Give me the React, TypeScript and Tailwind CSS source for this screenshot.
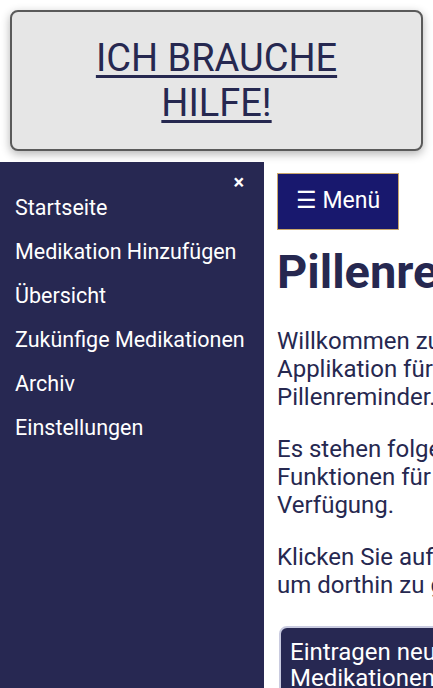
import React from "react";

const navItems = [
  "Startseite",
  "Medikation Hinzufügen",
  "Übersicht",
  "Zukünfige Medikationen",
  "Archiv",
  "Einstellungen",
];

export default function App() {
  return (
    <div
      className="w-[433px] h-[688px] overflow-hidden bg-white flex flex-col"
      style={{ fontFamily: "Roboto, 'Noto Sans', sans-serif" }}
    >
      <div className="m-[10px] mb-[11px] h-[141px] shrink-0 rounded-[8px] border-2 border-[#5a5a5a] bg-[#e6e6e6] shadow-[0_3px_10px_rgba(0,0,0,0.3)] flex items-center justify-center">
        <a
          href="#"
          className="text-center text-[38px] leading-[45px] text-[#262850] underline decoration-[3px] underline-offset-[4px]"
        >
          ICH BRAUCHE
          <br />
          HILFE!
        </a>
      </div>

      <div className="flex flex-1 min-h-0">
        <aside className="relative w-[264px] shrink-0 bg-[#272852] pt-[33px]">
          <button className="absolute right-[20px] top-[10px] text-[20px] font-bold text-white leading-none">
            ×
          </button>
          <nav className="flex flex-col">
            {navItems.map((item) => (
              <a
                key={item}
                href="#"
                className="block h-[44px] pl-[15px] text-[21.5px] leading-[26px] text-white"
              >
                {item}
              </a>
            ))}
          </nav>
        </aside>

        <main className="w-[340px] shrink-0 pl-[13px] pt-[11px] text-[#262850]">
          <button className="h-[57px] w-[122px] border border-[#c9a66b] bg-[#18186e] text-[23px] text-white">
            ☰ Menü
          </button>
          <h1 className="mt-[15px] text-[47px] font-bold leading-[54px] whitespace-nowrap">
            Pillenreminder
          </h1>
          <div className="mt-[28px] w-[320px] text-[24px] leading-[28px]">
            <p>Willkommen zur offiziellen Applikation für den Pillenreminder.</p>
            <p className="mt-[24px]">
              Es stehen folgende nützliche Funktionen für Sie zur Verfügung.
            </p>
            <p className="mt-[24px]">
              Klicken Sie auf eine Funktion, um dorthin zu gelangen.
            </p>
          </div>
          <div className="mt-[27px] ml-[2px] w-[300px] rounded-[8px] border-2 border-[#c9cbe0] bg-[#272852] px-[9px] pt-[11px] pb-[10px] text-[24px] leading-[26px] text-white">
            Eintragen neuer
            <br />
            Medikationen
          </div>
        </main>
      </div>
    </div>
  );
}
